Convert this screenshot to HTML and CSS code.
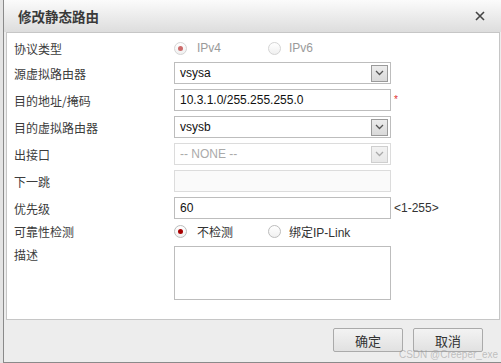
FILE: index.html
```html
<!DOCTYPE html>
<html lang="zh-CN">
<head>
<meta charset="utf-8">
<link rel="stylesheet" href="styles.css">
</head>
<body>
<div class="page">
  <div class="dialog">
    <div class="titlebar">
      <span class="title">修改静态路由</span>
      <svg class="close" width="10" height="10" viewBox="0 0 10 10"><path d="M1 1 L9 9 M9 1 L1 9" stroke="#444" stroke-width="1.6" fill="none"/></svg>
    </div>
    <div class="panel">
      <div class="row row-first">
        <div class="label">协议类型</div>
        <div class="field radios">
          <span class="opt disabled"><span class="radio checked"></span>IPv4</span>
          <span class="opt disabled"><span class="radio"></span>IPv6</span>
        </div>
      </div>
      <div class="row">
        <div class="label">源虚拟路由器</div>
        <div class="field box select"><span class="val">vsysa</span><span class="dd"><svg width="9" height="6" viewBox="0 0 9 6"><path d="M1 1 L4.5 4.5 L8 1" stroke="#555" stroke-width="1.3" fill="none"/></svg></span></div>
      </div>
      <div class="row">
        <div class="label">目的地址/掩码</div>
        <div class="field box"><span class="val">10.3.1.0/255.255.255.0</span></div>
        <span class="req">*</span>
      </div>
      <div class="row">
        <div class="label">目的虚拟路由器</div>
        <div class="field box select"><span class="val">vsysb</span><span class="dd"><svg width="9" height="6" viewBox="0 0 9 6"><path d="M1 1 L4.5 4.5 L8 1" stroke="#555" stroke-width="1.3" fill="none"/></svg></span></div>
      </div>
      <div class="row">
        <div class="label">出接口</div>
        <div class="field box select off"><span class="val">-- NONE --</span><span class="dd"><svg width="9" height="6" viewBox="0 0 9 6"><path d="M1 1 L4.5 4.5 L8 1" stroke="#aaa" stroke-width="1.3" fill="none"/></svg></span></div>
      </div>
      <div class="row">
        <div class="label">下一跳</div>
        <div class="field box off"></div>
      </div>
      <div class="row">
        <div class="label">优先级</div>
        <div class="field box"><span class="val">60</span></div>
        <span class="hint">&lt;1-255&gt;</span>
      </div>
      <div class="row row-radio">
        <div class="label">可靠性检测</div>
        <div class="field radios">
          <span class="opt"><span class="radio checked"></span>不检测</span>
          <span class="opt"><span class="radio"></span>绑定IP-Link</span>
        </div>
      </div>
      <div class="row row-desc">
        <div class="label">描述</div>
        <div class="field textarea"></div>
      </div>
    </div>
    <div class="footer">
      <button class="btn">确定</button>
      <button class="btn">取消</button>
    </div>
    <div class="bottom"></div>
    <div class="watermark">CSDN @Creeper_exe</div>
  </div>
</div>
</body>
</html>
```
FILE: styles.css
```css
html, body {
  margin: 0;
  padding: 0;
}
body {
  width: 501px;
  height: 363px;
  overflow: hidden;
  background: #e4e4e4;
  font-family: "Liberation Sans", "Noto Sans CJK SC", sans-serif;
  font-size: 12px;
  color: #333;
}
.page {
  display: flex;
  height: 363px;
  padding-left: 3px;
  box-sizing: border-box;
}
.dialog {
  position: relative;
  flex: 1;
  display: flex;
  flex-direction: column;
  border-left: 1px solid #8a8a8a;
  background: #ededed;
}
.titlebar {
  height: 32px;
  flex: none;
  display: flex;
  align-items: center;
  justify-content: space-between;
  padding: 0 14px 0 14px;
  background: linear-gradient(#fbfbfb, #dddddd);
}
.title {
  font-family: "Noto Sans CJK SC", sans-serif;
  font-weight: bold;
  font-size: 13.5px;
  color: #3a3a3a;
  margin-top: -1px;
}
.close {
  margin-right: 2px;
  margin-top: -1px;
}
.panel {
  flex: none;
  height: 282px;
  margin: 0 1px 0 2px;
  border: 1px solid #c6c6c6;
  background: #fff;
  padding: 4px 0 0 7px;
  box-sizing: content-box;
}
.row {
  display: flex;
  align-items: center;
  height: 22px;
  margin-top: 5px;
}
.row-first {
  margin-top: 0;
}
.row-first + .row {
  margin-top: 3px;
}
.row-radio {
  margin-top: 1px;
}
.row-desc {
  margin-top: 4px;
  height: 54px;
  align-items: flex-start;
}
.label {
  width: 160px;
  flex: none;
  font-family: "Noto Sans CJK SC", sans-serif;
  font-size: 12px;
  color: #3c3c3c;
}
.field {
  width: 217px;
  flex: none;
  box-sizing: border-box;
}
.box {
  height: 22px;
  border: 1px solid #bdbdbd;
  display: flex;
  align-items: center;
  justify-content: space-between;
  padding-left: 5px;
  color: #111;
  background: #fff;
}
.box.off {
  border-color: #dcdcdc;
  background: #fafafa;
  color: #aaa;
}
.select.off {
  background: #fff;
}
.dd {
  width: 17px;
  height: 17px;
  box-sizing: border-box;
  border: 1px solid #9a9a9a;
  background: linear-gradient(#ececec, #d9d9d9);
  margin-right: 2px;
  display: flex;
  align-items: center;
  justify-content: center;
}
.off .dd {
  border-color: #cfcfcf;
  background: linear-gradient(#f2f2f2, #e8e8e8);
}
.textarea {
  height: 54px;
  border: 1px solid #bdbdbd;
}
.req {
  color: #e03030;
  font-size: 10px;
  margin-left: 3px;
  margin-top: -2px;
}
.hint {
  margin-left: 3px;
  color: #333;
}
.radios {
  display: flex;
  align-items: center;
}
.opt {
  width: 94px;
  display: flex;
  align-items: center;
  font-family: "Liberation Sans", "Noto Sans CJK SC", sans-serif;
  color: #333;
}
.opt.disabled {
  color: #9a9a9a;
}
.radio {
  width: 13px;
  height: 13px;
  box-sizing: border-box;
  border: 1px solid #bcbcbc;
  border-radius: 50%;
  background: linear-gradient(#fff, #f0f0f0);
  margin-right: 10px;
  display: flex;
  align-items: center;
  justify-content: center;
}
.opt + .opt .radio {
  margin-right: 8px;
}
.radio.checked::after {
  content: "";
  width: 5px;
  height: 5px;
  border-radius: 50%;
  background: #a80000;
}
.disabled .radio {
  border-color: #d4d4d4;
}
.disabled .radio.checked::after {
  background: #cc6a6a;
}
.footer {
  flex: none;
  height: 42px;
  display: flex;
  justify-content: flex-end;
  align-items: flex-start;
  padding: 8px 18px 0 0;
  box-sizing: border-box;
  gap: 10px;
}
.btn {
  width: 70px;
  height: 24px;
  border: 1px solid #aaa;
  border-radius: 2px;
  background: linear-gradient(#f3f3f3, #e1e1e1);
  font-family: "Noto Sans CJK SC", sans-serif;
  font-size: 13px;
  line-height: 15px;
  color: #333;
  padding: 0;
}
.bottom {
  flex: 1;
  background: #c9c9c9;
  border-bottom: 1px solid #8a8a8a;
}
.watermark {
  position: absolute;
  right: 3px;
  bottom: 4px;
  font-size: 10px;
  line-height: 9px;
  color: rgba(150, 150, 150, 0.55);
  font-family: "Liberation Sans", sans-serif;
}
```
